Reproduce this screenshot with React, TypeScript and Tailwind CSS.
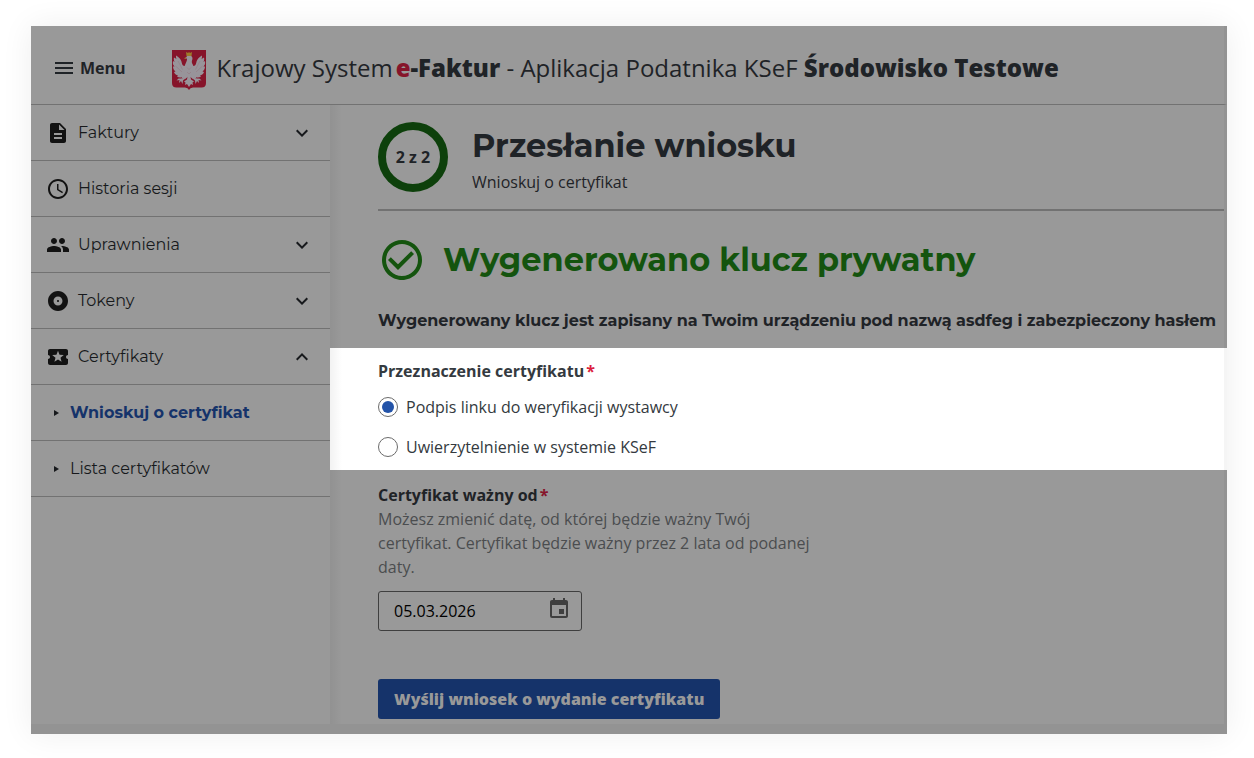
import React, { useState } from "react";
import type { IconType } from "react-icons";
import {
  MdAccessTime,
  MdAlbum,
  MdCheckCircleOutline,
  MdDescription,
  MdEvent,
  MdExpandLess,
  MdExpandMore,
  MdLocalActivity,
  MdMenu,
  MdPeople,
} from "react-icons/md";

type MenuItem = {
  name: string;
  icon: IconType;
  expandable?: boolean;
  children?: { name: string; active?: boolean }[];
};

const menu: MenuItem[] = [
  { name: "Faktury", icon: MdDescription, expandable: true },
  { name: "Historia sesji", icon: MdAccessTime },
  { name: "Uprawnienia", icon: MdPeople, expandable: true },
  { name: "Tokeny", icon: MdAlbum, expandable: true },
  {
    name: "Certyfikaty",
    icon: MdLocalActivity,
    expandable: true,
    children: [
      { name: "Wnioskuj o certyfikat", active: true },
      { name: "Lista certyfikatów" },
    ],
  },
];

const purposes = [
  { id: "podpis", label: "Podpis linku do weryfikacji wystawcy" },
  { id: "uwierzytelnienie", label: "Uwierzytelnienie w systemie KSeF" },
];

const Emblem = () => (
  <svg viewBox="0 0 68 80" className="h-10 w-[34px] shrink-0" aria-hidden="true">
    <path
      d="M0 0h68v66q0 9-9 9H42q-6 0-8 5-2-5-8-5H9q-9 0-9-9z"
      fill="#86142a"
    />
    <g fill="#98949a">
      {/* wings */}
      <path d="M30 27c-2 5-5 6-8 4-3-3-2-8-5-12-2-4-6-6-9-8 0 3 0 5 1 7L4 15c-1 4 0 6 1 9l-3-2c-1 5 0 8 3 11l-3 0c0 4 2 8 5 10l-3 1c1 4 4 6 8 7l-2 2c3 2 7 3 10 1l-1 4 7-4-1 5 7-6z" />
      <path d="M38 27c2 5 5 6 8 4 3-3 2-8 5-12 2-4 6-6 9-8 0 3 0 5-1 7l5-3c1 4 0 6-1 9l3-2c1 5 0 8-3 11l3 0c0 4-2 8-5 10l3 1c-1 4-4 6-8 7l2 2c-3 2-7 3-10 1l1 4-7-4 1 5-7-6z" />
      {/* head and body */}
      <path d="M28 16c1-4 5-6 8-5 5 1 6 6 4 10-1 4 0 5 2 9 3 8 2 16-4 23l-4 4-4-4c-6-7-7-15-4-23 2-5 4-8 4-12z" />
      {/* legs */}
      <path d="M27 48l-6 9-8 0-4 4 6-1-1 6 4-4 3 6 1-7 9-8z" />
      <path d="M41 48l6 9 8 0 4 4-6-1 1 6-4-4-3 6-1-7-9-8z" />
      {/* tail */}
      <path d="M31 53h6l1 6 6 4-3 2 1 5-4-2-4 6-4-6-4 2 1-5-3-2 6-4z" />
    </g>
    <path
      d="M12 22l9 17M7 32l13 12M56 22l-9 17M61 32L48 44M30 35l4 4 4-4M30 44l4 4 4-4"
      fill="none"
      stroke="#86142a"
      strokeOpacity=".25"
    />
    <path d="M29 12l-1-8 4 2 2-2 2 2 4-2-1 8zM28 14l-4 3 4 1z" fill="#9c7b2a" />
  </svg>
);

const Sidebar = () => (
  <nav className="w-[299px] shrink-0 font-[Montserrat,Inter,sans-serif] text-base text-[#17191c]">
    <ul>
      {menu.map(({ name, icon: Icon, expandable, children }) => (
        <li key={name}>
          <button
            type="button"
            className="flex h-14 w-full items-center border-b border-[#727272] pr-4 pl-[15px] text-left"
          >
            <Icon className="mr-2 size-6 text-[#121212]" />
            <span className="flex-1">{name}</span>
            {expandable &&
              (children ? (
                <MdExpandLess className="size-6" />
              ) : (
                <MdExpandMore className="size-6" />
              ))}
          </button>
          {children && (
            <ul>
              {children.map((child) => (
                <li key={child.name}>
                  <a
                    href="#"
                    className={`flex h-14 items-center gap-[11px] border-b border-[#727272] pl-[23px] ${
                      child.active ? "font-bold text-[#15336a]" : ""
                    }`}
                  >
                    <svg viewBox="0 0 5 6" className="h-[6px] w-[5px] text-[#17191c]">
                      <path d="M0 0l5 3-5 3z" fill="currentColor" />
                    </svg>
                    {child.name}
                  </a>
                </li>
              ))}
            </ul>
          )}
        </li>
      ))}
    </ul>
  </nav>
);

const App: React.FC = () => {
  const [purpose, setPurpose] = useState("podpis");
  const [date, setDate] = useState("05.03.2026");

  return (
    <div className="flex min-h-screen flex-col bg-white pt-[26px] pr-[27px] pb-6 pl-[31px] font-['Open_Sans',sans-serif] text-base text-[#1f2327]">
      <div className="flex flex-1 flex-col bg-[#999999] shadow-[0_0_30px_rgba(0,0,0,0.07)]">
        <header className="flex h-[79px] items-center border-r-[3px] border-b border-r-[#939393] border-b-[#727272] pt-[6px] pl-[21px]">
          <button type="button" className="flex items-center gap-1 font-bold">
            <MdMenu className="size-6" />
            Menu
          </button>
          <a href="#" className="ml-[46px] flex items-center gap-[11px]">
            <span className="pt-1">
              <Emblem />
            </span>
            <span className="text-2xl">
              Krajowy System
              <strong className="ml-[3px] font-extrabold">
                <span className="text-[#86142a]">e</span>-Faktur
              </strong>{" "}
              - Aplikacja Podatnika KSeF{" "}
              <strong className="font-extrabold">Środowisko Testowe</strong>
            </span>
          </a>
        </header>

        <div className="flex flex-1">
          <Sidebar />

          <main className="relative min-w-0 flex-1 border-r-[3px] border-[#939393]">
            {/* Sidebar shadow */}
            <div className="pointer-events-none absolute inset-y-0 left-0 z-10 w-3 bg-linear-to-r from-black/5 to-transparent" />

            <div className="pt-[17px] pl-12">
              <div className="flex gap-6 border-b-2 border-[#727272] pb-[15px]">
                <div className="flex size-[70px] shrink-0 items-center justify-center rounded-full border-8 border-[#0d400b] font-bold">
                  2 z 2
                </div>
                <div>
                  <h1 className="font-[Montserrat,Inter,sans-serif] text-[32px] leading-12 font-bold">
                    Przesłanie wniosku
                  </h1>
                  <p>Wnioskuj o certyfikat</p>
                </div>
              </div>

              <div className="mt-[25px] flex items-center gap-[17px] text-[#14540e]">
                <MdCheckCircleOutline className="size-12 shrink-0" />
                <h2 className="font-[Montserrat,Inter,sans-serif] text-[32px] leading-12 font-bold">
                  Wygenerowano klucz prywatny
                </h2>
              </div>

              <p className="mt-[25px] pb-[15px] font-[Montserrat,Inter,sans-serif] font-bold whitespace-nowrap">
                Wygenerowany klucz jest zapisany na Twoim urządzeniu pod nazwą asdfeg i
                zabezpieczony hasłem
              </p>
            </div>

            {/* Highlighted step */}
            <fieldset className="-mr-[3px] h-[122px] border-r-[3px] border-[#f5f5f5] bg-white pl-12 text-[#343a40]">
              <legend className="float-left w-full pt-[11px] font-bold">
                Przeznaczenie certyfikatu
                <span className="ml-0.5 text-[#dc1e3e]">*</span>
              </legend>
              <div className="clear-both flex flex-col gap-4 pt-3">
                {purposes.map(({ id, label }) => (
                  <label key={id} htmlFor={id} className="flex items-center gap-2">
                    <input
                      id={id}
                      type="radio"
                      name="purpose"
                      checked={purpose === id}
                      onChange={() => setPurpose(id)}
                      className="size-5 appearance-none rounded-full border border-[#6b6b6b] bg-white bg-clip-content p-[3px] checked:bg-[#2353a8]"
                    />
                    {label}
                  </label>
                ))}
              </div>
            </fieldset>

            <form className="pt-3 pb-1 pl-12" onSubmit={(e) => e.preventDefault()}>
              <label htmlFor="valid-from" className="block pt-px font-bold">
                Certyfikat ważny od
                <span className="ml-0.5 text-[#86142a]">*</span>
              </label>
              <p id="valid-from-hint" className="w-[440px] text-[#4b4d4f]">
                Możesz zmienić datę, od której będzie ważny Twój certyfikat. Certyfikat
                będzie ważny przez 2 lata od podanej daty.
              </p>
              <div className="mt-3 flex h-10 w-[204px] items-center rounded-[3px] border border-[#3f3f3f] pr-[10px] pl-[15px]">
                <input
                  id="valid-from"
                  type="text"
                  aria-describedby="valid-from-hint"
                  value={date}
                  onChange={(e) => setDate(e.target.value)}
                  className="min-w-0 flex-1 bg-transparent text-black outline-none"
                />
                <button type="button" aria-label="Wybierz datę" className="pb-1">
                  <MdEvent className="size-6 text-[#3f3f3f]" />
                </button>
              </div>
              <button
                type="submit"
                className="mt-12 h-10 rounded-[3px] bg-[#15336a] px-4 font-extrabold text-[#999999]"
              >
                Wyślij wniosek o wydanie certyfikatu
              </button>
            </form>
          </main>
        </div>

        <div className="h-[10px] bg-[#939393]" />
      </div>
    </div>
  );
};

export default App;
